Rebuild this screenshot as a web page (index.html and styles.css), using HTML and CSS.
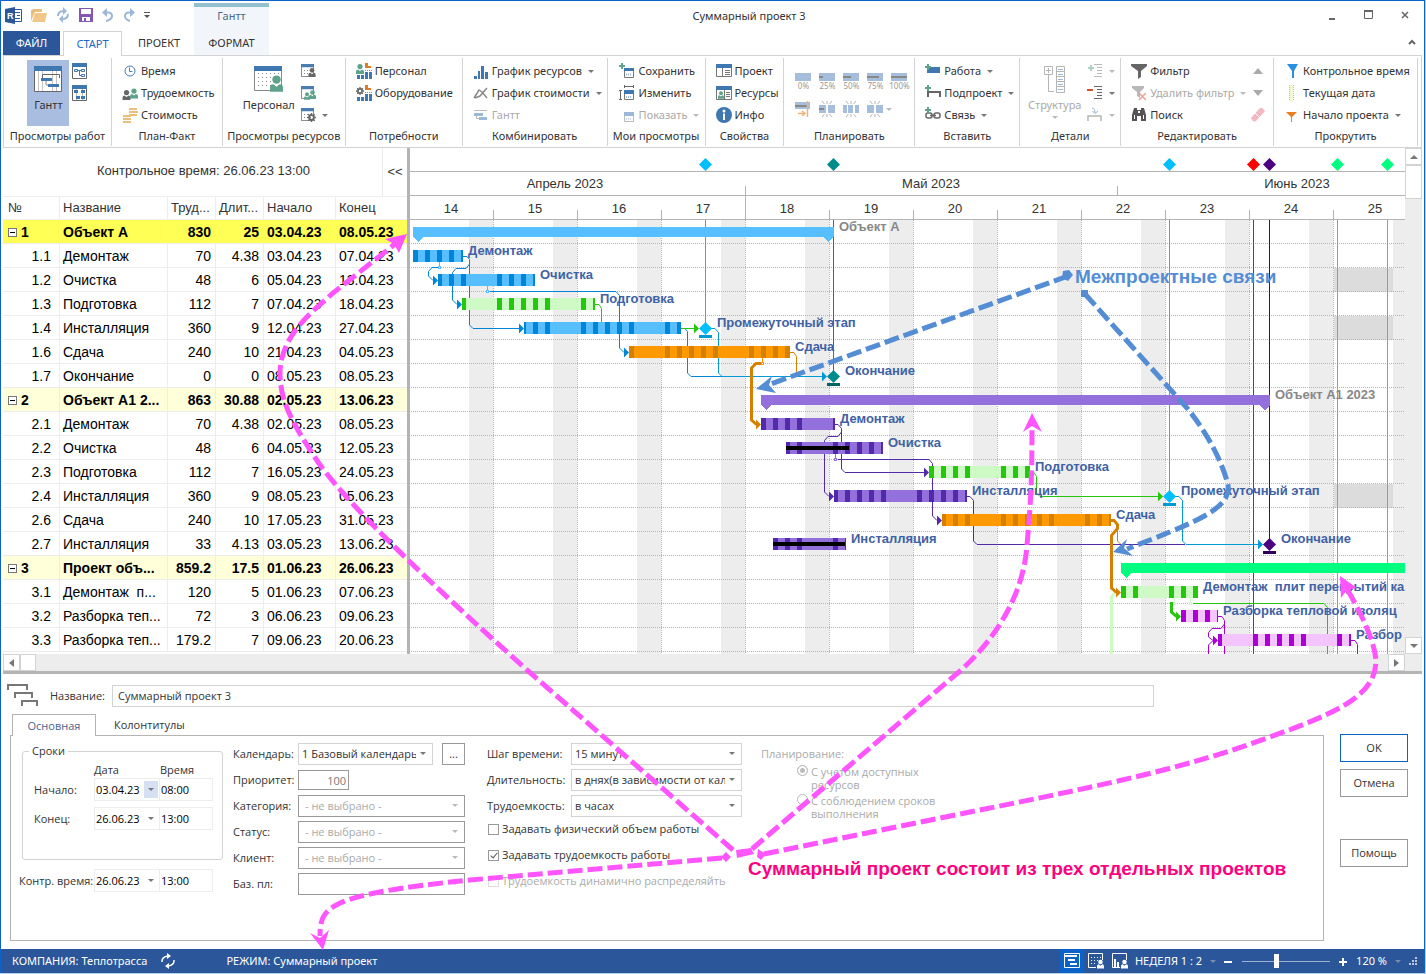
FILE: index.html
```html
<!DOCTYPE html>
<html lang="ru">
<head>
<meta charset="utf-8">
<title>Суммарный проект 3</title>
<link rel="stylesheet" href="styles.css">
</head>
<body>
<svg class="defs" aria-hidden="true">
  <symbol id="i-cal" viewBox="0 0 16 16"><path fill="#fff" stroke="#666" d="M.5 2.5h15v13H.5z"/><path fill="#4a7db3" d="M0 0h16v4H0z"/></symbol>
  <symbol id="i-man" viewBox="0 0 8 10"><circle cx="4" cy="2.6" r="2.6"/><path d="M0 10V7.5Q0 5.6 2 5.4l2 1.6 2-1.6q2 .2 2 2.1V10z"/></symbol>
  <symbol id="i-gear" viewBox="0 0 10 10"><circle cx="5" cy="5" r="2.6" fill="none" stroke="#666" stroke-width="2"/><path stroke="#666" stroke-width="1.6" d="M5 0v2M5 8v2M0 5h2M8 5h2M1.5 1.5l1.3 1.3M7.2 7.2l1.3 1.3M8.5 1.5L7.2 2.8M2.8 7.2L1.5 8.5"/></symbol>
  <symbol id="i-plus" viewBox="0 0 6 6"><path fill="#5fa28a" d="M2 0h2v2h2v2H4v2H2V4H0V2h2z"/></symbol>
  <symbol id="i-need" viewBox="0 0 16 16"><path fill="#e07b28" d="M9 0h3v3h3v2H9z"/><path stroke="#e07b28" stroke-dasharray="1 1" d="M9 7.500h7"/><path fill="#3f77b0" d="M9 9h3v7H9zM13 9h3v7h-3zM1 12h3v4H1zM5 12h3v4H5z"/></symbol>
  <symbol id="i-burst" viewBox="0 0 16 16"><path stroke="#b5b5b5" fill="none" d="M3 0l2.500 3M8 0v3M13 0l-2.500 3M3 16l2.500-3M8 16v-3M13 16l-2.500-3"/></symbol>
</svg>

<div class="window">
  <header class="titlebar">
    <div class="title-left">
      <div class="quick">
        <svg class="app-icon" width="17" height="17" viewBox="0 0 17 17"><path fill="#fff" stroke="#2b579a" d="M8.500 2.500h8v12h-8z"/><path stroke="#2b579a" d="M10 5.500h5M12 8.500h3M10 11.500h5"/><path fill="#2b579a" d="M0 2l10-2v17L0 15z"/><text x="2" y="12" class="app-letter">R</text></svg>
        <button class="q"><svg width="16" height="14" viewBox="0 0 16 14"><path fill="#e8c07c" d="M0 13V2h1l1-1h9v3H4z"/><path fill="#efc788" d="M4 5h12l-2 9H1z"/></svg></button>
        <button class="q"><svg width="14" height="16" viewBox="0 0 14 16"><path fill="none" stroke="#9db8d6" stroke-width="2" d="M2 9Q2 4 8 4M12 7q0 5-6 5"/><path fill="#9db8d6" d="M7 0l4 4-4 4zM7 8l-4 4 4 4z"/></svg></button>
        <button class="q"><svg width="14" height="14" viewBox="0 0 14 14"><path fill="#8657b0" d="M0 0h14v14H0z"/><path fill="#fff" d="M2 1h10v5H2zM3 9h8v4H3z"/><path fill="#8657b0" d="M5 10h2v4H5z"/></svg></button>
        <button class="q"><svg width="12" height="14" viewBox="0 0 12 14"><path fill="none" stroke="#9db8d6" stroke-width="2" d="M2 4.500h4q4 0 4 3.500t-6 5"/><path fill="#9db8d6" d="M0 4.500L5 0v9z"/></svg></button>
        <button class="q"><svg width="12" height="14" viewBox="0 0 12 14"><path fill="none" stroke="#9db8d6" stroke-width="2" d="M10 4.500H6Q2 4.500 2 8t5 5"/><path fill="#9db8d6" d="M12 4.500L7 0v9z"/></svg></button>
        <button class="q"><svg width="6" height="6" viewBox="0 0 6 6"><path fill="#555" d="M0 0h6v1H0zM0 3h6L3 6z"/></svg></button>
      </div>
      <nav class="tabs">
        <button class="tab file">ФАЙЛ</button>
        <button class="tab active">СТАРТ</button>
        <button class="tab">ПРОЕКТ</button>
      </nav>
    </div>
    <div class="context">
      <div class="context-name">Гантт</div>
      <button class="tab">ФОРМАТ</button>
    </div>
    <div class="title-right">
      <div class="title-row">
        <h1>Суммарный проект 3</h1>
        <div class="controls">
          <button aria-label="Свернуть"><svg width="10" height="12"><path fill="#666" d="M2 9h6v2H2z"/></svg></button>
          <button aria-label="Развернуть"><svg width="10" height="10"><path fill="none" stroke="#666" d="M.5 1.500h8v7h-8z"/><path fill="#666" d="M0 0h9v2H0z"/></svg></button>
          <button aria-label="Закрыть"><svg width="8" height="8"><path stroke="#666" stroke-width="1.500" d="M1 1l6 6M7 1L1 7"/></svg></button>
        </div>
      </div>
      <button class="collapse" aria-label="Свернуть ленту"><svg width="8" height="6"><path fill="none" stroke="#666" stroke-width="2" d="M1 5l3-3 3 3"/></svg></button>
    </div>
  </header>

  <section class="ribbon">
    <div class="group">
      <div class="tools center">
        <button class="big on"><svg width="28" height="26" viewBox="0 0 28 26"><path fill="#fff" stroke="#666" d="M.5.5h27v25H.5z"/><path stroke="#c4c4c4" d="M4.500 5v20M8.500 5v20M18.500 5v20M22.500 5v20"/><path fill="#3f77b0" d="M0 0h28v5H0z"/><path fill="none" stroke="#666" d="M8.500 12V8.500h17V12"/><path fill="none" stroke="#888" d="M12 13v6h4"/><path fill="#3f77b0" d="M7 12h11v3H7zM14 18h11v3H14z"/></svg><span>Гантт</span></button>
        <div class="stack two">
          <button><svg width="15" height="16"><path fill="#fff" stroke="#666" d="M.5.5h14v15H.5z"/><path fill="#3f77b0" d="M0 0h15v4H0z"/><path fill="none" stroke="#3f77b0" d="M2.500 6.500h3v2h-3zM9.500 6.500h3v2h-3zM9.500 11.500h3v2h-3zM6 7.500h3M7.500 8v4.500H9"/></svg></button>
          <button><svg width="15" height="16"><path fill="#fff" stroke="#666" d="M.5.5h14v15H.5z"/><path stroke="#bbb" d="M4.500 4v11M10.500 4v11"/><path fill="#3f77b0" d="M0 0h15v4H0zM2 5h4v3H2zM9 5h4v3H9zM4 11h4v3H4zM9 11h4v3H9z"/></svg></button>
        </div>
      </div>
      <div class="caption">Просмотры работ</div>
    </div>
    <div class="group">
      <div class="tools stack pad9">
        <button><svg width="16" height="16"><circle cx="8" cy="8" r="5" fill="none" stroke="#4a7db3"/><path fill="none" stroke="#4a7db3" d="M7.500 4.500v4h3"/></svg><span>Время</span></button>
        <button><svg width="16" height="16"><use href="#i-man" x="0" y="5" width="9" height="10" fill="#666"/><use href="#i-man" x="8" y="3" width="8" height="11" fill="#5fa28a"/></svg><span>Трудоемкость</span></button>
        <button><svg width="16" height="16"><path stroke="#e8c07c" stroke-width="2" d="M7 2h8M7 5h9M7 8h8M1 9h8M1 12h8M1 15h8"/></svg><span>Стоимость</span></button>
      </div>
      <div class="caption">План-Факт</div>
    </div>
    <div class="group">
      <div class="tools center">
        <button class="big"><svg width="29" height="26" viewBox="0 0 29 26"><path fill="#fff" stroke="#888" d="M.5.5h27v24H.5z"/><path stroke="#888" stroke-dasharray="1 3" d="M4.500 7v16M8.500 7v16M12.500 7v16M16.500 7v16M20.500 7v16M24.500 7v16"/><path fill="#3f77b0" d="M0 0h28v5H0z"/><use href="#i-man" x="16" y="9" width="13" height="17" fill="#5fa28a"/></svg><span>Персонал</span></button>
        <div class="stack">
          <button><svg width="15" height="15"><use href="#i-cal" width="13" height="13" /><path stroke="#888" stroke-dasharray="1 2" d="M3 6.500h9M3 9.500h9"/><use href="#i-man" x="7" y="4" width="8" height="9" fill="#666"/></svg></button>
          <button><svg width="15" height="15"><use href="#i-cal" width="13" height="13"/><use href="#i-man" x="3" y="6" width="6" height="8" fill="#5fa28a"/><use href="#i-man" x="8" y="4" width="7" height="9" fill="#5fa28a"/></svg></button>
          <button><svg width="15" height="15"><use href="#i-cal" width="13" height="13"/><path stroke="#888" stroke-dasharray="1 2" d="M3 6.500h9M3 9.500h9"/><use href="#i-gear" x="6" y="5" width="9" height="9"/></svg><i class="dd"></i></button>
        </div>
      </div>
      <div class="caption">Просмотры ресурсов</div>
    </div>
    <div class="group">
      <div class="tools stack pad9">
        <button><svg width="16" height="16"><use href="#i-need" width="16" height="16"/><use href="#i-man" x="0" y="1" width="8" height="10" fill="#5fa28a"/></svg><span>Персонал</span></button>
        <button><svg width="16" height="16"><use href="#i-need" width="16" height="16"/><use href="#i-gear" x="0" y="2" width="8" height="8"/></svg><span>Оборудование</span></button>
      </div>
      <div class="caption">Потребности</div>
    </div>
    <div class="group">
      <div class="tools stack pad9">
        <button><svg width="16" height="16"><path fill="#3f77b0" d="M1 13h3v3H1zM5 8h2v8H5zM8 3h3v13H8zM12 9h3v7h-3z"/></svg><span>График ресурсов</span><i class="dd"></i></button>
        <button><svg width="16" height="16"><path fill="none" stroke="#888" stroke-width="1.500" d="M1 13l5-8 3 2 5 6M2 13l5-2 7-8"/></svg><span>График стоимости</span><i class="dd"></i></button>
        <button disabled><svg width="16" height="16"><path fill="#9db8d6" d="M1 6h9v3H1zM6 10h8v3H6z"/><path fill="none" stroke="#bbb" d="M1 3.500h13M3.500 9v2.500H6"/></svg><span>Гантт</span></button>
      </div>
      <div class="caption">Комбинировать</div>
    </div>
    <div class="group">
      <div class="tools stack pad9">
        <button><svg width="18" height="16"><use href="#i-plus" x="1" width="6" height="6"/><path fill="#fff" stroke="#777" d="M6.500 5.500h9v9h-9z"/><path fill="#3f77b0" d="M6 5h10v3H6z"/><path stroke="#9db8d6" stroke-width="2" stroke-dasharray="1 1" d="M8 11.500h6"/></svg><span>Сохранить</span></button>
        <button><svg width="18" height="16"><path fill="none" stroke="#666" d="M6 1.500h10M6.500 0v3M15.500 0v3M2.500 5v10M1 5.500h3M1 14.500h3"/><path fill="#fff" stroke="#777" d="M6.500 6.500h9v8h-9z"/><path fill="#3f77b0" d="M6 5h10v4H6z"/><path stroke="#9db8d6" stroke-width="2" stroke-dasharray="1 1" d="M8 12h6"/></svg><span>Изменить</span></button>
        <button disabled><svg width="18" height="16"><path fill="#fff" stroke="#bbb" d="M6.500 6.500h9v8h-9z"/><path fill="#9db8d6" d="M6 5h10v4H6z"/><path stroke="#c8d8e8" stroke-width="2" stroke-dasharray="1 1" d="M8 12h6"/></svg><span>Показать</span><i class="dd"></i></button>
      </div>
      <div class="caption">Мои просмотры</div>
    </div>
    <div class="group">
      <div class="tools stack pad9">
        <button><svg width="16" height="16"><path fill="#fff" stroke="#777" d="M.5 1.500h15v12H.5z"/><path fill="#3f77b0" d="M0 1h16v4H0z"/><path stroke="#777" d="M6.500 5v8M9 7.500h5M9 9.500h5M9 11.500h5"/></svg><span>Проект</span></button>
        <button><svg width="16" height="16"><path fill="#fff" stroke="#777" d="M.5 1.500h15v13H.5z"/><path fill="#3f77b0" d="M0 1h16v4H0z"/><path stroke="#777" d="M8.500 5v9M10 7.500h4M10 9.500h4M10 11.500h4"/><use href="#i-man" x="2" y="6" width="6" height="8" fill="#5fa28a"/></svg><span>Ресурсы</span></button>
        <button><svg width="16" height="16"><circle cx="8" cy="8" r="8" fill="#3f77b0"/><circle cx="8" cy="4" r="1.500" fill="#fff"/><path fill="#fff" d="M7 6.500h2V13H7z"/></svg><span>Инфо</span></button>
      </div>
      <div class="caption">Свойства</div>
    </div>
    <div class="group">
      <div class="tools plan">
        <button><svg width="17" height="8"><path fill="#a5bedb" d="M0 0h16v8H0z"/></svg><small>0%</small></button>
        <button><svg width="17" height="8"><path fill="#a5bedb" d="M0 0h16v8H0z"/><path fill="#888" d="M0 3h4v2H0z"/></svg><small>25%</small></button>
        <button><svg width="17" height="8"><path fill="#a5bedb" d="M0 0h16v8H0z"/><path fill="#888" d="M0 3h8v2H0z"/></svg><small>50%</small></button>
        <button><svg width="17" height="8"><path fill="#a5bedb" d="M0 0h16v8H0z"/><path fill="#888" d="M0 3h12v2H0z"/></svg><small>75%</small></button>
        <button><svg width="17" height="8"><path fill="#a5bedb" d="M0 0h16v8H0z"/><path fill="#888" d="M0 3h16v2H0z"/></svg><small>100%</small></button>
        <button><svg width="16" height="16"><path fill="#a5bedb" d="M0 1h15v7H0z"/><path fill="#888" d="M0 4h12v2H0z"/><path fill="none" stroke="#f0b27a" stroke-width="1.500" d="M3 12.500h6M7 10l3 2.500L7 15M12.500 0v16"/></svg></button>
        <button><svg width="16" height="16"><use href="#i-burst" width="16" height="16"/><path fill="#a5bedb" d="M0 4h7v8H0zM9 4h7v8H9z"/><path fill="#888" d="M0 7h5v2H0z"/></svg></button>
        <button><svg width="16" height="16"><use href="#i-burst" width="16" height="16"/><path fill="#a5bedb" d="M0 4h4v8H0zM5 4h5v8H5zM12 4h4v8h-4z"/></svg></button>
        <button><svg width="16" height="16"><use href="#i-burst" width="16" height="16"/><path fill="#a5bedb" d="M0 4h7v8H0zM9 4h7v8H9z"/></svg></button>
        <i class="dd pale"></i>
      </div>
      <div class="caption">Планировать</div>
    </div>
    <div class="group">
      <div class="tools stack pad9">
        <button><svg width="16" height="16"><path fill="#3f77b0" d="M4 4h11v6H2V7z"/><use href="#i-plus" x="0" y="1" width="6" height="6"/></svg><span>Работа</span><i class="dd"></i></button>
        <button><svg width="16" height="16"><path fill="none" stroke="#666" stroke-width="2" d="M3 12V7h12v5"/><use href="#i-plus" x="0" y="0" width="6" height="6"/></svg><span>Подпроект</span><i class="dd"></i></button>
        <button><svg width="16" height="16"><g fill="none" stroke="#666" stroke-width="1.500"><rect x="1" y="6" width="6" height="5" rx="2"/><rect x="9" y="6" width="6" height="5" rx="2"/><path d="M5 8.500h6"/></g><use href="#i-plus" x="0" y="0" width="6" height="6"/></svg><span>Связь</span><i class="dd"></i></button>
      </div>
      <div class="caption">Вставить</div>
    </div>
    <div class="group">
      <div class="tools center">
        <button class="big tall" disabled><svg width="22" height="28"><g fill="none" stroke="#b5b5b5"><path d="M.5 1.500h8v8h-8zM2 5.500h5M4.500 3v5M4.500 10v16.500H10M12.500 1.500h8v26h-8zM12 6.500h9M12 11.500h9M12 16.500h9M12 21.500h9"/></g><path stroke="#9db8d6" d="M14 4.500h5M14 9.500h5M14 14.500h5M14 19.500h5M14 24.500h5"/></svg><span>Структура</span><i class="dd"></i></button>
        <div class="stack">
          <button disabled><svg width="16" height="16"><use href="#i-plus" x="1" y="2" width="6" height="6" opacity=".5"/><path stroke="#bbb" d="M7 1.500h8M10 4.500h5M10 7.500h5M10 10.500h5M7 13.500h8"/></svg><i class="dd"></i></button>
          <button><svg width="16" height="16"><path fill="#d9502e" d="M0 4h6v2H0z"/><path stroke="#666" d="M7 1.500h8M10 4.500h5M10 7.500h5M10 10.500h5M7 13.500h8"/></svg><i class="dd"></i></button>
          <button disabled><svg width="16" height="16"><path fill="none" stroke="#b5b5b5" stroke-width="1.500" d="M1 14V9h13v5"/><path fill="none" stroke="#9db8d6" d="M5 1q3 0 3 5M5.500 4L8 6.500 11 4"/></svg><i class="dd"></i></button>
        </div>
      </div>
      <div class="caption">Детали</div>
    </div>
    <div class="group">
      <div class="tools split pad9">
        <div class="stack">
          <button><svg width="16" height="16"><path fill="#666" d="M0 1h16v2l-6 5v6l-3 2V8L0 3z"/></svg><span>Фильтр</span></button>
          <button disabled><svg width="16" height="16"><path fill="#b8b8b8" d="M1 1h12v2L9 7v6l-3-2V7L1 3z"/><path stroke="#eba28e" stroke-width="1.500" d="M8 8l7 7M15 8l-7 7"/></svg><span>Удалить фильтр</span><i class="dd"></i></button>
          <button><svg width="16" height="16"><path fill="#555" d="M3 1h3v2h4V1h3l2 7v6h-5V9H6v5H1V8z"/><path fill="#fff" d="M7 4h2v2H7zM3 8h1v4H3zM12 8h1v4h-1z"/></svg><span>Поиск</span></button>
        </div>
        <div class="stack">
          <button disabled><svg width="16" height="16"><path fill="#aaa" d="M3 11h10L8 5z"/></svg></button>
          <button disabled><svg width="16" height="16"><path fill="#aaa" d="M3 5h10l-5 6z"/></svg></button>
          <button disabled><svg width="16" height="16"><path fill="#f2b8c4" d="M1 11L10 1q2-1 5 3L6 14q-3 2-5-3z"/><path stroke="#fff" d="M5 6l5 5"/></svg></button>
        </div>
      </div>
      <div class="caption">Редактировать</div>
    </div>
    <div class="group">
      <div class="tools stack pad9">
        <button><svg width="16" height="16"><path fill="#2b8fe0" d="M3 1h11L10 8v7H8V8z"/></svg><span>Контрольное время</span></button>
        <button><svg width="16" height="16"><path fill="#effad0" d="M5 0h4v16H5z"/><path stroke="#bbb" stroke-dasharray="1 1" d="M5.500 0v16M9.500 0v16"/></svg><span>Текущая дата</span></button>
        <button><svg width="16" height="16"><path fill="#e88020" d="M2 5h11L8 10v5H7v-5z"/></svg><span>Начало проекта</span><i class="dd"></i></button>
      </div>
      <div class="caption">Прокрутить</div>
    </div>
    <div></div>
  </section>

  <main class="workspace">
    <section class="sheet">
      <div class="sheet-top"><div class="control-time">Контрольное время: 26.06.23 13:00</div><button class="fold">&lt;&lt;</button></div>
      <table>
        <colgroup><col class="c1"><col class="c2"><col class="c3"><col class="c3"><col class="c5"><col class="c5"></colgroup>
        <thead><tr><th>№</th><th>Название</th><th>Труд...</th><th>Длит...</th><th>Начало</th><th>Конец</th></tr></thead>
        <tbody>
          <tr class="sum sel"><td><button class="tree" aria-label="Свернуть"></button>1</td><td>Объект А</td><td>830</td><td>25</td><td>03.04.23</td><td>08.05.23</td></tr>
          <tr><td>1.1</td><td>Демонтаж</td><td>70</td><td>4.38</td><td>03.04.23</td><td>07.04.23</td></tr>
          <tr><td>1.2</td><td>Очистка</td><td>48</td><td>6</td><td>05.04.23</td><td>13.04.23</td></tr>
          <tr><td>1.3</td><td>Подготовка</td><td>112</td><td>7</td><td>07.04.23</td><td>18.04.23</td></tr>
          <tr><td>1.4</td><td>Инсталляция</td><td>360</td><td>9</td><td>12.04.23</td><td>27.04.23</td></tr>
          <tr><td>1.6</td><td>Сдача</td><td>240</td><td>10</td><td>21.04.23</td><td>04.05.23</td></tr>
          <tr><td>1.7</td><td>Окончание</td><td>0</td><td>0</td><td>08.05.23</td><td>08.05.23</td></tr>
          <tr class="sum"><td><button class="tree" aria-label="Свернуть"></button>2</td><td>Объект А1 2...</td><td>863</td><td>30.88</td><td>02.05.23</td><td>13.06.23</td></tr>
          <tr><td>2.1</td><td>Демонтаж</td><td>70</td><td>4.38</td><td>02.05.23</td><td>08.05.23</td></tr>
          <tr><td>2.2</td><td>Очистка</td><td>48</td><td>6</td><td>04.05.23</td><td>12.05.23</td></tr>
          <tr><td>2.3</td><td>Подготовка</td><td>112</td><td>7</td><td>16.05.23</td><td>24.05.23</td></tr>
          <tr><td>2.4</td><td>Инсталляция</td><td>360</td><td>9</td><td>08.05.23</td><td>05.06.23</td></tr>
          <tr><td>2.6</td><td>Сдача</td><td>240</td><td>10</td><td>17.05.23</td><td>31.05.23</td></tr>
          <tr><td>2.7</td><td>Инсталляция</td><td>33</td><td>4.13</td><td>03.05.23</td><td>13.06.23</td></tr>
          <tr class="sum"><td><button class="tree" aria-label="Свернуть"></button>3</td><td>Проект объ...</td><td>859.2</td><td>17.5</td><td>01.06.23</td><td>26.06.23</td></tr>
          <tr><td>3.1</td><td>Демонтаж&nbsp; п...</td><td>120</td><td>5</td><td>01.06.23</td><td>07.06.23</td></tr>
          <tr><td>3.2</td><td>Разборка теп...</td><td>72</td><td>3</td><td>06.06.23</td><td>09.06.23</td></tr>
          <tr><td>3.3</td><td>Разборка теп...</td><td>179.2</td><td>7</td><td>09.06.23</td><td>20.06.23</td></tr>
        </tbody>
      </table>
    </section>
    <section class="chart">
      <svg class="gantt">
        <defs>
          <pattern id="grid" patternUnits="userSpaceOnUse" x="409" y="220" width="84" height="24"><path fill="#ededed" d="M60 0h24v24H60z"/><path stroke="#b4b4b4" stroke-dasharray="1 1" d="M.5 0V24M0 23.500H84"/></pattern>
          <pattern id="blue" patternUnits="userSpaceOnUse" x="413" y="0" width="84" height="24"><path fill="#57bfff" d="M0 0h84v24H0z"/><path fill="#0085d7" d="M0 0h5v24H0zM12 0h5v24h-5zM24 0h5v24h-5zM36 0h5v24h-5zM48 0h5v24h-5z"/></pattern>
          <pattern id="green" patternUnits="userSpaceOnUse" x="413" y="0" width="84" height="24"><path fill="#cdfac5" d="M0 0h84v24H0z"/><path fill="#26c60f" d="M0 0h5v24H0zM12 0h5v24h-5zM24 0h5v24h-5zM36 0h5v24h-5zM48 0h5v24h-5z"/></pattern>
          <pattern id="orange" patternUnits="userSpaceOnUse" x="413" y="0" width="84" height="24"><path fill="#ff9900" d="M0 0h84v24H0z"/><path fill="#d68000" d="M0 0h5v24H0zM12 0h5v24h-5zM24 0h5v24h-5zM36 0h5v24h-5zM48 0h5v24h-5z"/></pattern>
          <pattern id="violet" patternUnits="userSpaceOnUse" x="413" y="0" width="84" height="24"><path fill="#9370db" d="M0 0h84v24H0z"/><path fill="#5229a8" d="M0 0h5v24H0zM12 0h5v24h-5zM24 0h5v24h-5zM36 0h5v24h-5zM48 0h5v24h-5z"/></pattern>
          <pattern id="magenta" patternUnits="userSpaceOnUse" x="413" y="0" width="84" height="24"><path fill="#f3c4ff" d="M0 0h84v24H0z"/><path fill="#aa00d4" d="M0 0h5v24H0zM12 0h5v24h-5zM24 0h5v24h-5zM36 0h5v24h-5zM48 0h5v24h-5z"/></pattern>
          <path id="dia" d="M0-6.500L6.500 0 0 6.500-6.500 0z"/>
          <path id="tip" d="M-5-5L0 0-5 5z"/>
        </defs>
        <g transform="translate(-410 -148)">
          <g class="crisp">
            <path fill="#dcdcdc" d="M1334 268h59v24h-59zM1334 316h59v24h-59zM1334 484h59v24h-59z"/>
            <path fill="url(#grid)" d="M410 220h1590v1200H410z"/>
            <path stroke="#b4b4b4" d="M410 171.500H2000M410 195.500H2000M410 219.500H2000M745.500 186v9M1117.500 186v9M493.500 210v9M577.500 210v9M661.500 210v9M745.500 196v23M829.500 210v9M913.500 210v9M997.500 210v9M1081.500 210v9M1165.500 210v9M1249.500 210v9M1333.500 210v9"/>
          </g>
          <g class="scale">
            <text x="565" y="188">Апрель 2023</text><text x="931" y="188">Май 2023</text><text x="1297" y="188">Июнь 2023</text>
            <text x="451" y="213">14</text><text x="535" y="213">15</text><text x="619" y="213">16</text><text x="703" y="213">17</text><text x="787" y="213">18</text><text x="871" y="213">19</text><text x="955" y="213">20</text><text x="1039" y="213">21</text><text x="1123" y="213">22</text><text x="1207" y="213">23</text><text x="1291" y="213">24</text><text x="1375" y="213">25</text>
          </g>
          <g class="crisp">
            <path stroke="#00bfff" d="M705.500 220V323M1169.500 220V491"/>
            <path stroke="#008b8b" d="M833.500 220V371"/>
            <path stroke="#e01010" d="M1253.500 220V700"/>
            <path stroke="#4b0082" d="M1269.500 220V539"/>
            <path stroke="#1ee07c" d="M1337.500 220V1200M1387.500 220V1200"/>
          </g>
          <g class="link">
            <path stroke="#0085d7" d="M463 256.500h4l2.500 3V325l3.500 3.500h47M469.500 264l-3.500 4.500h-10l-3.500 4V300l4.500 4.500M438 267.500h-6l-3.500 4V276l4.500 4.500M490 291.500h126l3.500 4V348l4.500 4.500M683 328.500h2l2.500 3V373l3.500 3.500h31"/>
            <path stroke="#26c60f" d="M595 304.500h4l2.500 4V322M681 328.500h14M1030 472.500h4l2.500 4V493l3.500 3.500h120M1193 603.500h131l3.500 4V700"/>
            <path stroke="#d68000" d="M790 352.500h4l2.500 4V373l3 3.500M1117.500 524V541l3.500 3.500"/>
            <path stroke="#5229a8" d="M835 424.500h3l3.500 4V469l3.500 3.500h80M841.500 432l-3.500 4.500h-10l-3.500 4V492l4.500 4.500M838 459.500h91l3.500 4V516l4.500 4.500M967 496.500h3l3.500 4V541l3.500 3.500h208"/>
            <path stroke="#009ad6" d="M711 328.500h4l3.500 4V373l3.500 3.500h101M1175 496.500h4l3.500 4V541l3.500 3.500h73"/>
            <path stroke="#aa00d4" d="M1218 616.500h4l2.500 4V700M1224.500 624l-3.500 4.500h-9l-3.500 4V637l4.500 3.500-4.500 4.500v50M1351 640.500h4l2.500 4V700"/>
          </g>
          <g class="link thick">
            <path stroke="#cdfac5" d="M1111.500 700V597l3-4"/>
            <path stroke="#d68000" d="M761 363.500h-5l-4.500 4.500V420l5 4.500M1111 520.500h3l3.500 4v4l-6 7V588l5 4.500"/>
            <path stroke="#26c60f" d="M1171.500 602v10l5 4.500"/>
          </g>
          <g class="crisp">
            <path fill="#57bfff" d="M413 227h421v10h-1l-4 5-6-5H423l-5 5-5-5z"/>
            <path fill="#9370db" d="M761 395h509v10l-5 5-6-5H772l-6 5-5-5z"/>
            <path fill="#00ff7f" d="M1121 563h900v10H1132l-6 5-5-5z"/>
            <path fill="url(#blue)" d="M413 250h50v12h-50zM438 274h97v12h-97zM524 322h157v12H524z"/>
            <path fill="url(#green)" d="M462 298h133v12H462zM929 466h101v12H929zM1121 586h77v12h-77z"/>
            <path fill="url(#orange)" d="M629 346h161v12H629zM942 514h169v12H942z"/>
            <path fill="url(#violet)" d="M761 418h74v12h-74zM786 442h97v12h-97zM834 490h133v12H834zM773 538h73v12h-73z"/>
            <path fill="url(#magenta)" d="M1181 610h37v12h-37zM1218 634h133v12h-133z"/>
            <path d="M786 446h63v4h-63zM773 542h72v4h-72z"/>
            <path fill="#009ad6" d="M699 335h13v3h-13zM1163 503h13v3h-13z"/>
            <path fill="#006464" d="M827 383h13v3h-13z"/><path fill="#320058" d="M1263 551h13v3h-13z"/>
          </g>
          <g class="crisp" fill="#fff">
            <path stroke="#57bfff" d="M439.500 262v4M438.500 266.500h2v2h-2zM487.500 286v4M486.500 290.500h2v2h-2z"/>
            <path stroke="#ff9900" d="M762.500 358v4M761.500 362.500h2v2h-2z"/>
            <path stroke="#9370db" d="M835.500 454v4M834.500 458.500h2v2h-2z"/>
            <path stroke="#cdfac5" d="M1174.500 598v4M1173.500 602.500h2v2h-2zM1190.500 598v4M1189.500 602.500h2v2h-2z"/>
          </g>
          <g fill="#0085d7"><use href="#tip" x="438" y="280.500"/><use href="#tip" x="462" y="304.500"/><use href="#tip" x="524" y="328.500"/><use href="#tip" x="629" y="352.500"/></g>
          <g fill="#26c60f"><use href="#tip" x="699" y="328.500"/><use href="#tip" x="1163" y="496.500"/><use href="#tip" x="1181" y="616.500"/></g>
          <g fill="#d68000"><use href="#tip" x="761" y="424.500"/><use href="#tip" x="1121" y="592.500"/></g>
          <g fill="#5229a8"><use href="#tip" x="929" y="472.500"/><use href="#tip" x="834" y="496.500"/><use href="#tip" x="942" y="520.500"/></g>
          <g fill="#009ad6"><use href="#tip" x="827" y="376.500"/><use href="#tip" x="1263" y="544.500"/></g>
          <use href="#tip" x="1218" y="640.500" fill="#aa00d4"/>
          <g fill="#00bfff"><use href="#dia" x="705.500" y="164.500"/><use href="#dia" x="705.500" y="328.500"/><use href="#dia" x="1169.500" y="164.500"/><use href="#dia" x="1169.500" y="496.500"/></g>
          <g fill="#008b8b"><use href="#dia" x="833.500" y="164.500"/><use href="#dia" x="833.500" y="376.500"/></g>
          <use href="#dia" x="1253.500" y="164.500" fill="#f00"/>
          <g fill="#4b0082"><use href="#dia" x="1269.500" y="164.500"/><use href="#dia" x="1269.500" y="544.500"/></g>
          <g fill="#00ff7f"><use href="#dia" x="1337.500" y="164.500"/><use href="#dia" x="1387.500" y="164.500"/></g>
          <g class="names">
            <text class="dim" x="839" y="231">Объект А</text><text x="468" y="255">Демонтаж</text><text x="540" y="279">Очистка</text><text x="600" y="303">Подготовка</text><text x="717" y="327">Промежуточный этап</text><text x="795" y="351">Сдача</text><text x="845" y="375">Окончание</text>
            <text class="dim" x="1275" y="399">Объект А1 2023</text><text x="840" y="423">Демонтаж</text><text x="888" y="447">Очистка</text><text x="1035" y="471">Подготовка</text><text x="972" y="495">Инсталляция</text><text x="1181" y="495">Промежуточный этап</text><text x="1116" y="519">Сдача</text><text x="851" y="543">Инсталляция</text><text x="1281" y="543">Окончание</text>
            <text x="1203" y="591">Демонтаж&nbsp; плит перекрытий ка</text><text x="1223" y="615">Разборка тепловой изоляц</text><text x="1356" y="639">Разбор</text>
          </g>
        </g>
      </svg>
    </section>
    <div class="vbar"><button aria-label="Вверх"><svg width="8" height="4"><path fill="#777" d="M0 4h8L4 0z"/></svg></button><div class="thumb"></div><div class="track"></div><button aria-label="Вниз"><svg width="8" height="4"><path fill="#777" d="M0 0h8L4 4z"/></svg></button></div>
  </main>
  <div class="hbar"><button aria-label="Влево"><svg width="5" height="8"><path fill="#777" d="M5 0v8L0 4z"/></svg></button><div class="thumb"></div><div class="track"></div><button aria-label="Вправо"><svg width="5" height="8"><path fill="#777" d="M0 0v8l5-4z"/></svg></button></div>

  <form class="details">
    <div class="name-row">
      <svg width="31" height="23"><path fill="none" stroke="#777" stroke-width="2" d="M1 6V1h19v5M8 14V9h17v5M15 22v-5h15v5"/></svg>
      <label for="name">Название:</label>
      <input id="name" class="box light" value="Суммарный проект 3">
    </div>
    <div class="sheets"><button type="button" class="current">Основная</button><button type="button">Колонтитулы</button></div>
    <div class="body">
      <div class="pane">
        <div class="dates">
          <fieldset>
            <legend>Сроки</legend>
            <div class="date-grid">
              <span></span><span>Дата</span><span>Время</span>
              <label for="d1">Начало:</label><div class="date"><input id="d1" value="03.04.23"><button type="button" class="hot" aria-label="Выбрать дату"><i class="dd"></i></button></div><input class="time" aria-label="Время начала" value="08:00">
              <label for="d2">Конец:</label><div class="date"><input id="d2" value="26.06.23"><button type="button" aria-label="Выбрать дату"><i class="dd"></i></button></div><input class="time" aria-label="Время конца" value="13:00">
            </div>
          </fieldset>
          <div class="check-time"><label for="d3">Контр. время:</label><div class="date"><input id="d3" value="26.06.23"><button type="button" aria-label="Выбрать дату"><i class="dd"></i></button></div><input class="time" aria-label="Контрольное время" value="13:00"></div>
        </div>
        <div class="fields a">
          <label for="cal">Календарь:</label><div class="pair"><div class="sel-wrap"><select id="cal" class="light"><option>1 Базовый календарь</option></select></div><button type="button" class="dots">...</button></div>
          <label for="pri">Приоритет:</label><input id="pri" class="box num" value="100">
          <label for="cat">Категория:</label><div class="sel-wrap"><select id="cat" disabled><option>- не выбрано -</option></select></div>
          <label for="st">Статус:</label><div class="sel-wrap"><select id="st" disabled><option>- не выбрано -</option></select></div>
          <label for="cl">Клиент:</label><div class="sel-wrap"><select id="cl" disabled><option>- не выбрано -</option></select></div>
          <label for="bp">Баз. пл:</label><div class="sel-wrap"><select id="bp" disabled><option></option></select></div>
        </div>
        <div>
          <div class="fields b">
            <label for="step">Шаг времени:</label><div class="sel-wrap"><select id="step" class="light"><option>15 минут</option></select></div>
            <label for="dur">Длительность:</label><div class="sel-wrap"><select id="dur" class="light"><option>в днях(в зависимости от календаря)</option></select></div>
            <label for="lab">Трудоемкость:</label><div class="sel-wrap"><select id="lab" class="light"><option>в часах</option></select></div>
          </div>
          <div class="checks">
            <label><input type="checkbox">Задавать физический объем работы</label>
            <label><input type="checkbox" checked>Задавать трудоемкость работы</label>
            <label class="off"><input type="checkbox" disabled>Трудоемкость динамично распределяйть</label>
          </div>
        </div>
        <div class="planning off">
          <div class="plan-title">Планирование:</div>
          <label><input type="radio" name="plan" checked disabled><span>С учетом доступных<br>ресурсов</span></label>
          <label><input type="radio" name="plan" disabled><span>С соблюдением сроков<br>выполнения</span></label>
        </div>
      </div>
      <div class="actions">
        <button type="button" class="ok">OK</button>
        <button type="button">Отмена</button>
        <button type="button" class="help">Помощь</button>
      </div>
    </div>
  </form>

  <footer class="status">
    <span>КОМПАНИЯ: Теплотрасса</span>
    <button class="sync" aria-label="Обновить"><svg width="14" height="16"><g fill="none" stroke="#fff" stroke-width="1.500"><path d="M1 9q-.5-5 6-6M13 7q.5 5-6 6"/></g><path fill="#fff" d="M6 0l4 3-4 3zM8 10l-4 3 4 3z"/></svg></button>
    <span class="grow">РЕЖИМ: Суммарный проект</span>
    <button class="view on" aria-label="Гантт"><svg width="16" height="16"><path fill="none" stroke="#fff" d="M.5.5h15v14H.5z"/><path stroke="#fff" stroke-width="2" d="M1 3h12M4 7h7M6 11h7"/></svg></button>
    <button class="view" aria-label="Ресурсы"><svg width="16" height="16"><path fill="none" stroke="#fff" d="M8 14.500H.5V.5h14V7"/><path stroke="#fff" stroke-dasharray="1 2" d="M3 4.500h10M3 7.500h7M3 10.500h6"/><use href="#i-man" x="9" y="6" width="7" height="10" fill="#fff"/></svg></button>
    <button class="view" aria-label="Графики"><svg width="16" height="16"><path fill="none" stroke="#fff" d="M8 14.500H.5V.5h14V7"/><path fill="#fff" d="M2 6h2v8H2zM5 9h2v5H5z"/><use href="#i-man" x="9" y="6" width="7" height="10" fill="#fff"/></svg></button>
    <span class="week">НЕДЕЛЯ 1 : 2</span><i class="dd"></i>
    <button class="zoom" aria-label="Уменьшить"><svg width="9" height="9"><path fill="#fff" d="M0 4h8v2H0z"/></svg></button>
    <input type="range" aria-label="Масштаб" min="0" max="100" value="39">
    <button class="zoom" aria-label="Увеличить"><svg width="9" height="9"><path fill="#fff" d="M0 4h8v2H0zM3 1h2v8H3z"/></svg></button>
    <span>120 %</span><i class="dd"></i>
    <svg class="grip" width="9" height="9"><path fill="#b9c8de" d="M6 0h2v2H6zM6 3h2v2H6zM6 6h2v2H6zM3 3h2v2H3zM3 6h2v2H3zM0 6h2v2H0z"/></svg>
  </footer>

  <svg class="notes">
    <g fill="none" stroke-width="5" stroke-dasharray="15 5">
      <g stroke="#548dd4">
        <path d="M1068 276L768 385"/>
        <path d="M1085 294L1187 408C1205 430 1222 460 1228 485C1232 510 1190 524 1127 549"/>
      </g>
      <g stroke="#ff55ff">
        <path d="M733 850L527 670C440 592 350 508 318 462C290 420 280 400 280 372C281 335 312 312 333 293L395 244"/>
        <path d="M752 849L960 671C1000 635 1024 590 1027 545C1031 500 1032 480 1032 425"/>
        <path d="M722 858L470 880C400 887 360 894 340 903C324 911 320 918 320 936"/>
        <path d="M764 854L940 818C1100 786 1180 770 1267 738C1340 712 1376 695 1376 660C1374 640 1362 615 1347 589"/>
      </g>
    </g>
    <g fill="#548dd4"><path d="M756 389l16-13-3 9 7 8zM1113 552l14-13-3 9 9 8zM1073 275l-5 6-6-3 1-7 6-1zM1081 290h7v7h-7z"/></g>
    <g fill="#ff55ff"><path d="M407 234l-8 19-5-9-9-5zM1032 413l10 19-10-6-9 6zM323 950l-13-17 10 5 9-8zM1340 576l17 12-10 2-6 8zM726 852l5 5-5 5-5-5zM736 850l15-2 3 6-17 4zM758 849l8 5-5 6-4-3z"/></g>
    <text x="1075" y="283" fill="#548dd4">Межпроектные связи</text>
    <text x="748" y="875" fill="#ff0080">Суммарный проект состоит из трех отдельных проектов</text>
  </svg>
</div>
</body>
</html>
```
FILE: styles.css
```css
* { box-sizing: border-box; }
body { margin: 0; background: #b8cfe8; font-family: "Noto Sans", sans-serif; font-size: 11px; line-height: 16px; color: #333; }
button, input, select { font: inherit; color: inherit; margin: 0; padding: 0; border: 0; background: none; border-radius: 0; }
button { display: flex; align-items: center; white-space: nowrap; }
svg { flex: none; display: block; }
.defs { position: absolute; width: 0; height: 0; }
.dd { flex: none; width: 0; height: 0; border: 3px solid transparent; border-top-color: #777; border-bottom: 0; }

.window { position: relative; display: flex; flex-direction: column; height: calc(100vh - 1px); margin-right: 1px; border: solid #0b62c9; border-width: 1px 1px 0 1px; background: #fff; overflow: hidden; }

/* title bar and ribbon tabs */
.titlebar { display: flex; height: 54px; flex: none; }
.title-left { width: 193px; }
.quick { display: flex; align-items: center; height: 30px; padding: 0 4px 2px; gap: 9px; }
.app-letter { font: bold 9px "Liberation Sans", sans-serif; fill: #fff; }
.tabs { display: flex; gap: 3px; height: 25px; padding-left: 2px; }
.tab { height: 24px; padding: 0 13px; font-size: 11px; justify-content: center; }
.file { width: 57px; padding: 0; background: #2b579a; color: #fff; }
.tab.active { position: relative; width: 59px; height: 25px; border: 1px solid #d3d3d3; border-bottom: 0; background: #fff; color: #1b6bc6; padding: 0; }
.context { display: flex; flex-direction: column; width: 75px; margin-top: 2px; border-top: 4px solid #93c0cf; background: #f2f6fa; }
.context-name { height: 24px; padding-top: 1px; text-align: center; color: #4a6a85; }
.context .tab { padding: 0; }
.title-right { flex: 1; display: flex; flex-direction: column; }
.title-row { display: flex; align-items: center; height: 30px; }
h1 { flex: 1; margin: 0; text-align: center; font-size: 11px; font-weight: normal; }
.controls { display: flex; justify-content: flex-end; align-items: center; gap: 27px; width: 195px; padding: 0 15px 2px 0; }
.collapse { align-self: flex-end; height: 22px; padding-right: 8px; }

.ribbon { display: grid; grid-template-columns: 108fr 111fr 123fr 117fr 145fr 98fr 79fr 131fr 105fr 101fr 153fr 144fr 3fr; flex: none; margin: 0 2px; border: 1px solid #d3d3d3; height: 93px; }
.group { display: flex; flex-direction: column; margin: 2px 0 3px; border-right: 1px solid #d3d3d3; min-width: 0; }
.caption { height: 20px; line-height: 20px; text-align: center; white-space: nowrap; }
.tools { height: 66px; margin-top: 2px; }
.stack { display: flex; flex-direction: column; }
.stack button { height: 22px; gap: 3px; }
.stack .dd { margin-left: 3px; }
.pad9 { padding-left: 10px; }
.center { display: flex; justify-content: center; gap: 3px; }
.two { justify-content: flex-start; }
.big { flex-direction: column; width: 42px; height: 66px; padding-top: 6px; gap: 5px; }
.big:not(.on) { width: 58px; }
.on { background: #a9bde0; }
.tall { padding-top: 5px; gap: 4px; }
.tall .dd { margin-top: -1px; }
button:disabled { color: #aaa; }
button:disabled .dd, .dd.pale { border-top-color: #bbb; }
.split { display: flex; justify-content: space-between; padding-right: 7px; }
.plan { display: grid; grid-template-columns: repeat(5, 24px); grid-template-rows: 28px 28px; padding: 7px 0 0 11px; align-items: center; }
.plan button { flex-direction: column; align-items: flex-start; }
.plan small { width: 16px; font-size: 8px; line-height: 9px; color: #999; display: flex; justify-content: center; }
.plan .dd { margin-left: -5px; }

/* work sheet and chart */
.workspace { display: flex; flex: 1; min-height: 0; margin: 0 2px; font-family: "Liberation Sans", sans-serif; }
.sheet { flex: none; width: 407px; border-right: 3px solid #b4b4b4; overflow: hidden; font-size: 14px; }
.sheet-top { display: flex; height: 48px; font-size: 13px; }
.control-time { flex: 1; padding: 0 0 0 22px; text-align: center; line-height: 46px; border-right: 1px solid #ededed; }
.fold { width: 24px; justify-content: center; }
table { table-layout: fixed; width: 404px; border-collapse: separate; border-spacing: 0; color: #000; }
.c1 { width: 57px; } .c2 { width: 108px; } .c3 { width: 48px; } .c5 { width: 72px; }
th, td { height: 24px; padding: 0 3px; border: solid #ededed; border-width: 0 1px 1px 0; white-space: nowrap; overflow: hidden; text-align: left; line-height: 16px; }
th { font-size: 13px; font-weight: normal; border-top-width: 1px; color: #333; }
th:first-child { padding-left: 5px; }
td:nth-child(3), td:nth-child(4) { text-align: right; padding-right: 4px; }
td:first-child { text-align: right; padding-right: 8px; }
.sum { background: #ffffd9; font-weight: bold; }
.sel { background: #ffff55; }
.sum td:first-child { text-align: left; padding-left: 5px; }
.tree { display: inline-block; width: 9px; height: 9px; margin-right: 4px; border: 1px solid #777; background: #fff; vertical-align: 1px; }
.tree::after { content: ""; display: block; width: 5px; height: 1px; margin: 3px 1px; background: #000; }
.chart { flex: 1; min-width: 0; overflow: hidden; }
.gantt { width: 100%; height: 100%; }
.crisp { shape-rendering: crispEdges; }
.link { fill: none; stroke-width: 1; }
.thick { stroke-width: 3; }
.scale { font-size: 13px; fill: #333; text-anchor: middle; }
.names { font-size: 13px; font-weight: bold; fill: #3f62a5; }
.dim { fill: #888; }
.vbar, .hbar { flex: none; display: flex; background: #ededed; }
.vbar { width: 17px; flex-direction: column; }
.vbar button, .hbar button { width: 17px; height: 17px; justify-content: center; background: #fff; border: 1px solid #d3d3d3; }
.thumb { background: #fff; border: 1px solid #d3d3d3; }
.vbar .thumb { height: 34px; }
.hbar .thumb { width: 16px; }
.track { flex: 1; }
.hbar { margin: 0 2px; height: 20px; padding-right: 17px; border-bottom: 3px solid #b4b4b4; }

/* project details */
.details { flex: none; padding: 10px 16px 8px 9px; font-family: "Open Sans", sans-serif; font-size: 11px; }
.name-row { display: flex; align-items: center; height: 23px; margin: 0 254px 7px -3px; }
.name-row label { width: 74px; padding-left: 12px; }
.box { height: 22px; padding: 0 5px; border: 1px solid #999; }
.light { border-color: #d3d3d3; }
#name { flex: 1; min-width: 0; }
.sheets { display: flex; height: 22px; padding-left: 2px; }
.sheets button { height: 22px; padding: 0 18px; }
.sheets .current { position: relative; width: 84px; justify-content: center; padding: 0; height: 22px; border: 1px solid #b4b4b4; border-bottom: 0; background: #fff; color: #4a6591; }
.body { display: grid; grid-template-columns: 1fr 68px; gap: 16px; margin-top: -1px; }
.pane { display: grid; grid-template-columns: 214px 254px 274px 1fr; height: 206px; padding: 7px 8px; border: 1px solid #b4b4b4; }
.dates { padding-top: 1px; }
fieldset { width: 201px; height: 116px; margin: 0 0 0 3px; padding: 0 0 0 11px; border: 1px solid #d3d3d3; border-radius: 3px; }
legend { margin-left: -5px; padding: 0 3px; line-height: 14px; }
.date-grid { display: grid; grid-template-columns: 60px 66px 53px; grid-template-rows: 20px 23px 29px; align-items: end; }
.date-grid label { line-height: 23px; }
.date { display: flex; align-items: center; justify-content: space-between; height: 23px; padding: 2px 1px; border: 1px solid #ededed; color: #000; }
.date input { width: 48px; }
.date button { width: 15px; height: 17px; justify-content: center; }
.hot { background: #d5e0f2; }
.time { width: 53px; height: 23px; padding-left: 1px; border: 1px solid #ededed; border-left: 0; color: #000; }
.check-time { display: grid; grid-template-columns: 75px 66px 53px; align-items: center; margin-top: 9px; }
.fields { display: grid; grid-auto-rows: 22px; row-gap: 4px; align-items: center; white-space: nowrap; }
.a { grid-template-columns: 65px 167px; }
.b { grid-template-columns: 84px 171px; }
.pair { display: flex; justify-content: space-between; }
.pair .sel-wrap { width: 135px; }
.dots { width: 23px; height: 22px; justify-content: center; border: 1px solid #999; }
.num { width: 51px; height: 20px; padding-right: 2px; text-align: right; color: #777; }
.sel-wrap { position: relative; }
.sel-wrap::after { content: ""; position: absolute; right: 7px; top: 9px; border: 3px solid transparent; border-top-color: #777; border-bottom: 0; }
.sel-wrap:has(:disabled)::after { border-top-color: #bbb; }
select { appearance: none; width: 100%; height: 22px; padding: 0 16px 0 3px; border: 1px solid #999; overflow: hidden; }
select.light { border-color: #d3d3d3; }
select:disabled { opacity: 1; color: #aaa; padding-left: 6px; }
.checks { display: grid; grid-auto-rows: 22px; row-gap: 4px; padding-top: 1px; white-space: nowrap; }
.checks label { display: flex; align-items: center; gap: 3px; padding-left: 1px; }
.checks input { appearance: none; position: relative; width: 11px; height: 11px; border: 1px solid #999; }
.checks input:checked::after { content: ""; position: absolute; left: 3px; top: 0; width: 3px; height: 6px; border: solid #555; border-width: 0 1px 1px 0; transform: rotate(40deg); }
.checks .off input { border-color: #ddd; }
.off { color: #aaa; }
.planning label { display: flex; gap: 3px; margin: 0 0 3px 36px; line-height: 13px; }
.plan-title { height: 22px; line-height: 22px; }
.planning input { appearance: none; width: 11px; height: 11px; border: 1px solid #bbb; border-radius: 50%; }
.planning input:checked { background: #bbb; box-shadow: inset 0 0 0 2px #fff; }
.actions { display: flex; flex-direction: column; gap: 7px; margin-top: -1px; }
.actions button { height: 28px; justify-content: center; border: 1px solid #999; }
.actions .ok { border-color: #0b62c9; }
.actions .help { margin-top: 35px; }

/* status bar */
.status { flex: none; display: flex; align-items: center; height: 24px; padding: 0 6px 0 11px; background: #2b579a; color: #fff; }
.sync { margin: 0 51px 0 14px; }
.grow { flex: 1; }
.view { width: 24px; height: 24px; justify-content: center; }
.view.on { background: #0b62c9; }
.week { margin-left: 3px; }
.status .dd { margin: 0 8px; border-top-color: #7b8ba8; }
.status input { appearance: none; width: 88px; height: 16px; margin: 0 9px; background: linear-gradient(#9fb2d0, #9fb2d0) center / 100% 1px no-repeat; }
.status input::-webkit-slider-thumb { appearance: none; width: 5px; height: 14px; background: #fff; }
.status .zoom + span { margin-left: 8px; }

.notes { position: absolute; left: -1px; top: -1px; width: calc(100% + 1px); height: calc(100% + 1px); pointer-events: none; }
.notes text { font: bold 19px "Liberation Sans", sans-serif; }
```
